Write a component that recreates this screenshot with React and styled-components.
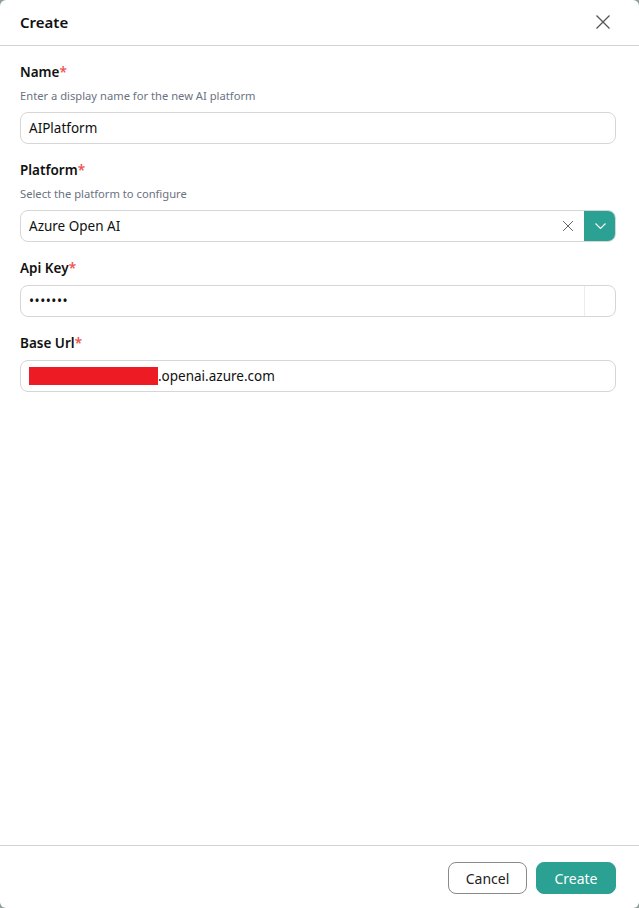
import React from 'react'
import styled, { createGlobalStyle } from 'styled-components'

const GlobalStyle = createGlobalStyle`
    html, body {
        margin: 0;
        padding: 0;
        background: #8f9e9c;
    }
    * { box-sizing: border-box; }
`

const TEAL = '#2aa193'

const Modal = styled.div`
    width: 639px;
    height: 908px;
    background: #fff;
    border-radius: 6px;
    display: flex;
    flex-direction: column;
    font-family: "Segoe UI", "Noto Sans", "Open Sans", sans-serif;
    color: #111;
    overflow: hidden;
`

const Header = styled.div`
    height: 46px;
    display: flex;
    align-items: center;
    justify-content: space-between;
    padding: 0 28px 1px 20px;
    border-bottom: 1px solid #d4d4d8;
`

const Title = styled.h2`
    margin: 0;
    font-size: 15px;
    font-weight: 600;
    color: #111;
`

const IconButton = styled.button`
    border: none;
    background: none;
    padding: 0;
    display: flex;
    cursor: pointer;
    color: #555;
`

const Body = styled.div`
    flex: 1;
    padding: 16px 23px 0 20px;
    display: flex;
    flex-direction: column;
    gap: 16px;
`

const Field = styled.div`
    display: flex;
    flex-direction: column;
`

const Label = styled.label`
    font-size: 13.5px;
    font-weight: 600;
    line-height: 20px;
    margin-bottom: ${p => (p.$tight ? '7px' : '6px')};
`

const Star = styled.span`
    color: #ef5350;
`

const Hint = styled.div`
    font-size: 11.2px;
    color: #6b7280;
    line-height: 16px;
    margin-bottom: 8px;
`

const InputBox = styled.div`
    height: 32px;
    border: 1px solid #d6d6d6;
    border-radius: 8px;
    display: flex;
    align-items: stretch;
    overflow: hidden;
    font-size: 13.5px;
    background: #fff;
`

const Value = styled.div`
    flex: 1;
    display: flex;
    align-items: center;
    padding-left: 8px;
    color: #111;
    letter-spacing: ${p => (p.$secret ? '0.5px' : 'normal')};
`

const Redacted = styled.span`
    display: inline-block;
    width: 129px;
    height: 18px;
    background: #ed1c24;
`

const ClearBtn = styled.div`
    width: 32px;
    display: flex;
    align-items: center;
    justify-content: center;
    color: #555;
`

const DropBtn = styled.div`
    width: 32px;
    background: ${TEAL};
    display: flex;
    align-items: center;
    justify-content: center;
    color: #fff;
    margin: -1px -1px -1px 0;
`

const Toggle = styled.div`
    width: 31px;
    border-left: 1px solid #ececec;
`

const Footer = styled.div`
    border-top: 1px solid #d4d4d8;
    padding: 16px 23px 14px 20px;
    display: flex;
    justify-content: flex-end;
    gap: 9px;
`

const Button = styled.button`
    height: 32px;
    padding: 0 16px;
    border-radius: 8px;
    font-family: inherit;
    font-size: 14px;
    cursor: pointer;
    border: 1px solid ${p => (p.$primary ? TEAL : '#8a8a8a')};
    background: ${p => (p.$primary ? TEAL : '#fff')};
    color: ${p => (p.$primary ? '#fff' : '#222')};
    min-width: ${p => (p.$primary ? '80px' : '79px')};
`

const XIcon = ({ size, weight }) => (
    <svg width={size} height={size} viewBox="0 0 16 16" fill="none" stroke="currentColor" strokeWidth={weight}>
        <path d="M1.5 1.5 L14.5 14.5 M14.5 1.5 L1.5 14.5" />
    </svg>
)

const ChevronDown = () => (
    <svg width="11" height="6" viewBox="0 0 11 6" fill="none" stroke="currentColor" strokeWidth="1.1">
        <path d="M0.5 0.5 L5.5 5.5 L10.5 0.5" />
    </svg>
)

export default function App() {
    return (
        <>
            <GlobalStyle />
            <Modal>
                <Header>
                    <Title>Create</Title>
                    <IconButton aria-label="Close">
                        <XIcon size={16} weight={1.3} />
                    </IconButton>
                </Header>
                <Body>
                    <Field>
                        <Label>Name<Star>*</Star></Label>
                        <Hint>Enter a display name for the new AI platform</Hint>
                        <InputBox>
                            <Value>AIPlatform</Value>
                        </InputBox>
                    </Field>
                    <Field>
                        <Label>Platform<Star>*</Star></Label>
                        <Hint>Select the platform to configure</Hint>
                        <InputBox>
                            <Value>Azure Open AI</Value>
                            <ClearBtn><XIcon size={12} weight={1.2} /></ClearBtn>
                            <DropBtn><ChevronDown /></DropBtn>
                        </InputBox>
                    </Field>
                    <Field>
                        <Label $tight>Api Key<Star>*</Star></Label>
                        <InputBox>
                            <Value $secret>•••••••</Value>
                            <Toggle />
                        </InputBox>
                    </Field>
                    <Field>
                        <Label $tight>Base Url<Star>*</Star></Label>
                        <InputBox>
                            <Value><Redacted />.openai.azure.com</Value>
                        </InputBox>
                    </Field>
                </Body>
                <Footer>
                    <Button>Cancel</Button>
                    <Button $primary>Create</Button>
                </Footer>
            </Modal>
        </>
    )
}
